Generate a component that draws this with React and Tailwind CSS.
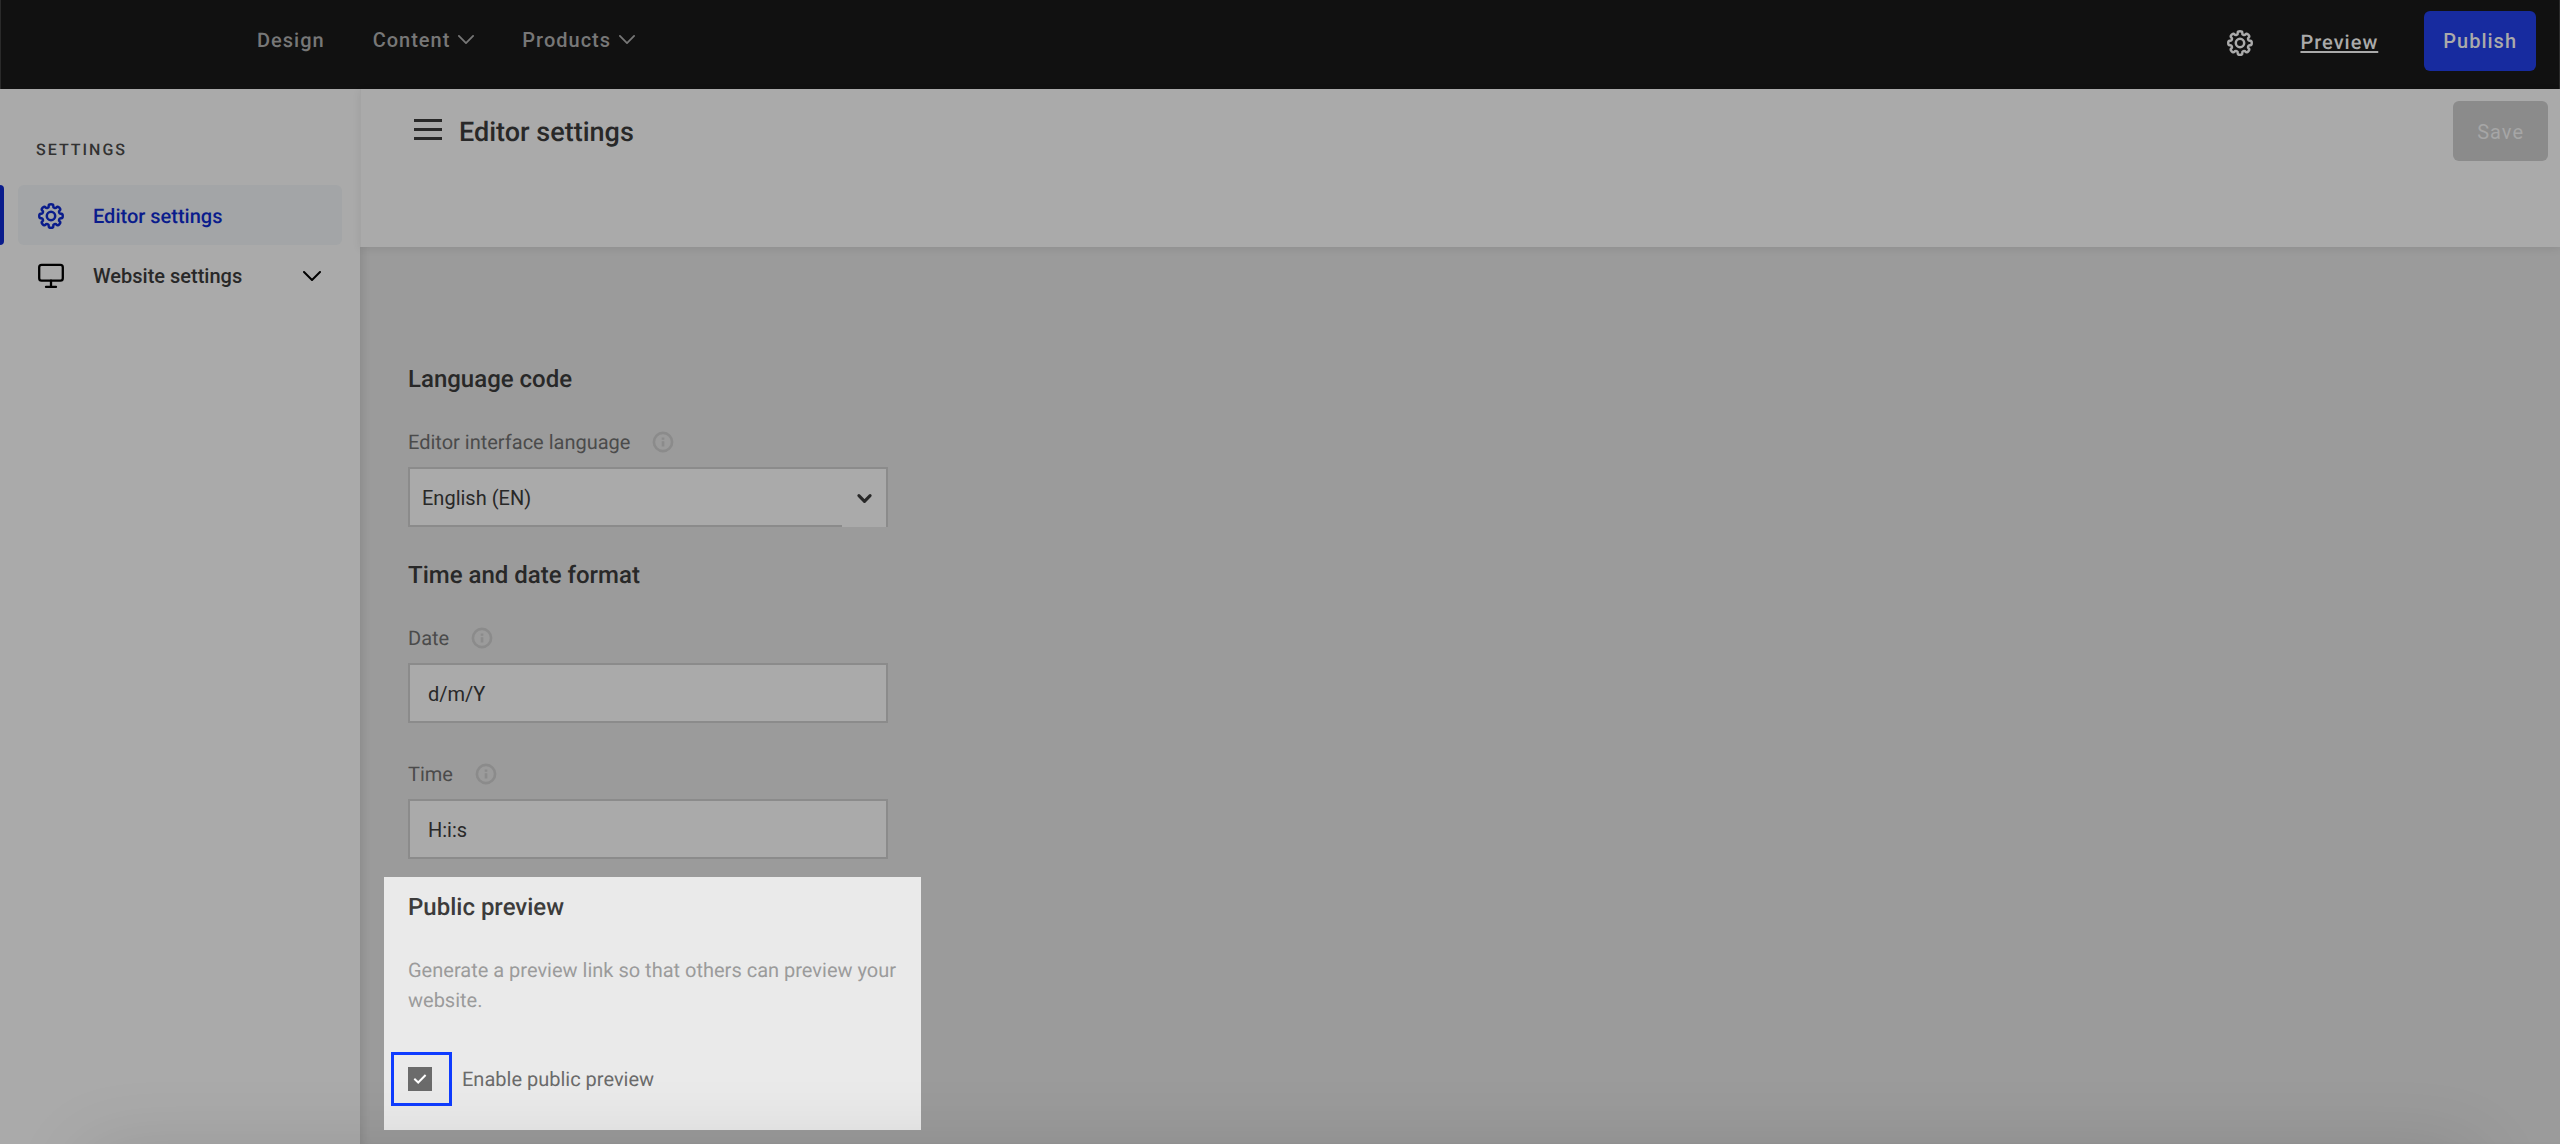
import React from "react";

function ring(teeth, outer, inner, topHalf, baseHalf) {
  const pts = [];
  for (let i = 0; i < teeth; i++) {
    const mid = (360 / teeth) * i - 90;
    [[-baseHalf, inner], [-topHalf, outer], [topHalf, outer], [baseHalf, inner]].forEach(([d, r]) => {
      const a = ((mid + d) * Math.PI) / 180;
      pts.push([16 + r * Math.cos(a), 16 + r * Math.sin(a)]);
    });
  }
  const half = (p, q) => [(p[0] + q[0]) / 2, (p[1] + q[1]) / 2];
  const f = (p) => p.map((n) => n.toFixed(2)).join(" ");
  const n = pts.length;
  let d = "M" + f(half(pts[n - 1], pts[0]));
  pts.forEach((p, i) => {
    d += "Q" + f(p) + " " + f(half(p, pts[(i + 1) % n]));
  });
  return d + "Z";
}

const GEAR = ring(8, 12, 8.9, 12, 13);

function Gear() {
  return (
    <svg viewBox="0 0 32 32" className="size-8" fill="none" stroke="currentColor" strokeWidth="2.5" strokeLinejoin="round" aria-hidden="true">
      <path d={GEAR} />
      <circle cx="16" cy="16" r="4.2" />
    </svg>
  );
}

function Monitor() {
  return (
    <svg viewBox="0 0 32 32" className="size-8" fill="none" stroke="currentColor" strokeWidth="2.3" strokeLinecap="round" strokeLinejoin="round" aria-hidden="true">
      <rect x="4.2" y="4.8" width="23.6" height="15.8" rx="2.4" />
      <path d="M16 20.6V26.6M11 26.9H21" />
    </svg>
  );
}

function Chevron({ className, width }) {
  return (
    <svg viewBox="0 0 18 10" className={className} fill="none" stroke="currentColor" strokeWidth={width} strokeLinecap="round" strokeLinejoin="round" aria-hidden="true">
      <path d="M1 1L9 9L17 1" />
    </svg>
  );
}

function Info() {
  return (
    <svg viewBox="0 0 22 22" className="size-[22px]" fill="none" stroke="currentColor" strokeWidth="2.6" aria-label="Information" role="img">
      <circle cx="11" cy="11" r="9.1" />
      <path d="M11 10.2V15.4M11 6.4V8.8" />
    </svg>
  );
}

function NavMenu({ children }) {
  return (
    <button type="button" className="flex items-center gap-2">
      {children}
      <Chevron className="h-[9px] w-4" width="2" />
    </button>
  );
}

function Heading({ children }) {
  return <h2 className="text-[24px] leading-[30px] font-medium text-[#282828]">{children}</h2>;
}

function FieldLabel({ htmlFor, children }) {
  return (
    <div className="mb-2.5 flex items-center gap-[22px] text-[#8b8b8b]">
      <label htmlFor={htmlFor} className="text-[#4b4b4b]">{children}</label>
      <Info />
    </div>
  );
}

const INPUT = "block h-[60px] w-full border-2 border-[#8b8b8b] bg-[#aaaaaa] px-[18px] pt-0.5 text-[#282828]";

export default function App() {
  return (
    <div className="relative flex min-h-screen flex-col overflow-hidden bg-[#9b9b9b] font-['Roboto',sans-serif] text-[20px] leading-[30px] [text-rendering:geometricPrecision]">
      <header className="flex h-[89px] justify-between border-x border-[#2a2a2a] bg-[#111111] pr-[23px] pl-64 font-medium tracking-[1px]">
        <nav className="flex items-center gap-12 pb-2.5 text-[#777777]">
          <a href="#design">Design</a>
          <NavMenu>Content</NavMenu>
          <NavMenu>Products</NavMenu>
        </nav>
        <div className="flex items-center pb-1 text-[#aaaaaa]">
          <button type="button" aria-label="Settings" className="mr-11"><Gear /></button>
          <a href="#preview" className="mr-[46px] pb-0.5 underline decoration-2 underline-offset-2">Preview</a>
          <button type="button" className="mb-[3px] h-[60px] rounded-md bg-[#172b9f] px-[19px] tracking-[1px]">Publish</button>
        </div>
      </header>

      <div className="flex flex-1">
        <aside className="w-[360px] shrink-0 bg-[#aaaaaa] pt-[46px] font-medium">
          <h2 className="mb-5 pl-9 text-[16px] leading-[30px] font-medium tracking-[2px] text-[#323232]">SETTINGS</h2>
          <nav>
            <a href="#editor" className="flex h-[60px] text-[#0a1c8c]">
              <span className="w-1 rounded-r bg-[#0a1c8c]" />
              <span className="mr-[18px] ml-3.5 flex flex-1 items-center gap-[26px] rounded-md bg-[#a3a5a7] pt-0.5 pl-[17px]">
                <Gear />
                Editor settings
              </span>
            </a>
            <button type="button" className="flex h-[60px] w-full items-center gap-[26px] pt-0.5 pr-[39px] pl-[35px] text-[#282828]">
              <span className="text-black"><Monitor /></span>
              <span className="flex-1 text-left">Website settings</span>
              <Chevron className="h-2.5 w-[18px] text-black" width="2" />
            </button>
          </nav>
        </aside>

        <main className="min-w-0 flex-1 shadow-[inset_8px_0_10px_-6px_rgba(0,0,0,0.12)]">
          <div className="flex h-[158px] items-start justify-between border-l border-[#a4a4a4] bg-[#aaaaaa] pt-3 pr-3 pl-[53px] shadow-[0_2px_8px_rgba(0,0,0,0.08)]">
            <div className="flex items-center gap-[17px] pt-[13px] text-[#282828]">
              <button type="button" aria-label="Toggle menu" className="flex w-7 flex-col gap-1.5 pb-1.5">
                <span className="h-[3px] bg-current" />
                <span className="h-[3px] bg-current" />
                <span className="h-[3px] bg-current" />
              </button>
              <h1 className="text-[27px] leading-9 font-medium">Editor settings</h1>
            </div>
            <button type="button" disabled className="h-[60px] rounded-md bg-[#8b8b8b] px-6 pt-0.5 tracking-[1px] text-[#a6a6a6]">Save</button>
          </div>

          <form className="w-[528px] pt-[117px] pl-12">
            <Heading>Language code</Heading>
            <div className="mt-[33px]">
              <FieldLabel htmlFor="language">Editor interface language</FieldLabel>
              <div className="relative">
                <select id="language" className="block h-[60px] w-full appearance-none border-2 border-[#8b8b8b] bg-[#aaaaaa] px-3 pt-0.5 text-[#282828]">
                  <option>English (EN)</option>
                </select>
                <span className="pointer-events-none absolute top-0.5 right-0.5 bottom-0 flex w-11 items-center justify-center bg-[#aaaaaa] text-[#282828]">
                  <Chevron className="h-[7px] w-[13px] overflow-visible" width="4.4" />
                </span>
              </div>
            </div>

            <div className="mt-[33px]"><Heading>Time and date format</Heading></div>
            <div className="mt-[33px]">
              <FieldLabel htmlFor="date">Date</FieldLabel>
              <input id="date" type="text" defaultValue="d/m/Y" className={INPUT} />
            </div>
            <div className="mt-9">
              <FieldLabel htmlFor="time">Time</FieldLabel>
              <input id="time" type="text" defaultValue="H:i:s" className={INPUT} />
            </div>

            <section className="mt-[18px] -mr-[33px] -ml-6 bg-[#eaeaea] pt-[15px] pr-3 pb-6 pl-6">
              <h2 className="text-[24px] leading-[30px] font-medium text-[#3c3c3c]">Public preview</h2>
              <p className="mt-[33px] text-[#9b9b9b]">Generate a preview link so that others can preview your website.</p>
              <div className="mt-[37px] -ml-[17px] flex items-center gap-2.5">
                <span className="flex h-[54px] w-[61px] items-center border-[3px] border-[#0f3cff] pl-3.5">
                  <span className="relative size-6">
                    <input id="public" type="checkbox" defaultChecked className="block size-6 appearance-none bg-[#6b6b6b]" />
                    <svg viewBox="0 0 24 24" className="pointer-events-none absolute inset-0 size-6" fill="none" stroke="white" strokeWidth="2" aria-hidden="true">
                      <path d="M6.3 11.8L10.2 15.5L17.6 8" />
                    </svg>
                  </span>
                </span>
                <label htmlFor="public" className="text-[#6b6b6b]">Enable public preview</label>
              </div>
            </section>
          </form>
        </main>
      </div>
      <div className="pointer-events-none absolute right-32 bottom-0 left-32 h-0 shadow-[0_50px_80px_40px_rgba(0,0,0,0.14)]" />
    </div>
  );
}
